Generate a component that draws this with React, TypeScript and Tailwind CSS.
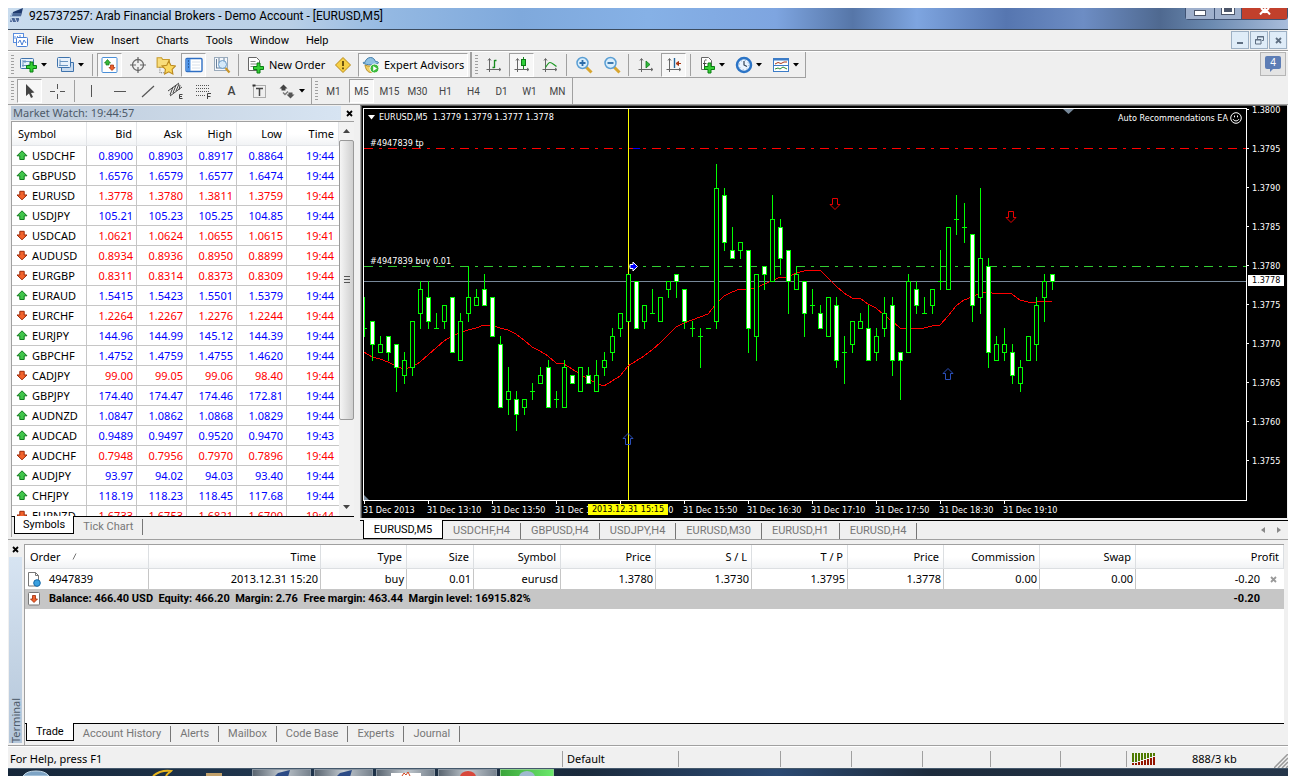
import React from 'react';
import clsx from 'clsx';

type Quote = [string, 'up' | 'down', string, string, string, string, string];

const quotes: Quote[] = [
  ['USDCHF', 'up', '0.8900', '0.8903', '0.8917', '0.8864', '19:44'],
  ['GBPUSD', 'up', '1.6576', '1.6579', '1.6577', '1.6474', '19:44'],
  ['EURUSD', 'down', '1.3778', '1.3780', '1.3811', '1.3759', '19:44'],
  ['USDJPY', 'up', '105.21', '105.23', '105.25', '104.85', '19:44'],
  ['USDCAD', 'down', '1.0621', '1.0624', '1.0655', '1.0615', '19:41'],
  ['AUDUSD', 'down', '0.8934', '0.8936', '0.8950', '0.8899', '19:44'],
  ['EURGBP', 'down', '0.8311', '0.8314', '0.8373', '0.8309', '19:44'],
  ['EURAUD', 'up', '1.5415', '1.5423', '1.5501', '1.5379', '19:44'],
  ['EURCHF', 'down', '1.2264', '1.2267', '1.2276', '1.2244', '19:44'],
  ['EURJPY', 'up', '144.96', '144.99', '145.12', '144.39', '19:44'],
  ['GBPCHF', 'up', '1.4752', '1.4759', '1.4755', '1.4620', '19:44'],
  ['CADJPY', 'down', '99.00', '99.05', '99.06', '98.40', '19:44'],
  ['GBPJPY', 'up', '174.40', '174.47', '174.46', '172.81', '19:44'],
  ['AUDNZD', 'up', '1.0847', '1.0862', '1.0868', '1.0829', '19:44'],
  ['AUDCAD', 'up', '0.9489', '0.9497', '0.9520', '0.9470', '19:43'],
  ['AUDCHF', 'down', '0.7948', '0.7956', '0.7970', '0.7896', '19:44'],
  ['AUDJPY', 'up', '93.97', '94.02', '94.03', '93.40', '19:44'],
  ['CHFJPY', 'up', '118.19', '118.23', '118.45', '117.68', '19:44'],
  ['EURNZD', 'down', '1.6733', '1.6753', '1.6821', '1.6700', '19:44'],
];

// open, high, low, close in pips above 1.3700
const candles = [
  [72, 76, 71, 72], [73, 73, 68, 70], [69, 71, 69, 70], [71, 71, 68, 69], [70, 70, 64, 67], [66, 69, 65, 68],
  [67, 73, 66, 73], [74, 78, 72, 77], [76, 78, 72, 73], [72, 74, 72, 72], [73, 75, 72, 75], [76, 76, 69, 69],
  [68, 74, 68, 73], [74, 80, 73, 76], [75, 77, 75, 76], [77, 79, 75, 75], [76, 76, 71, 71], [70, 71, 62, 62],
  [63, 67, 61, 64], [63, 64, 59, 61], [62, 63, 61, 63], [64, 65, 63, 64], [65, 67, 65, 66], [67, 68, 62, 62],
  [63, 64, 62, 63], [62, 68, 62, 67], [66, 66, 65, 65], [64, 67, 64, 67], [66, 67, 65, 65], [64, 68, 64, 66],
  [67, 69, 66, 68], [69, 72, 68, 71], [72, 74, 71, 74], [73, 79, 73, 79], [78, 78, 72, 72], [73, 75, 72, 75],
  [74, 77, 74, 74], [73, 76, 73, 76], [77, 78, 76, 78], [79, 79, 76, 78], [77, 77, 72, 73], [72, 73, 71, 72],
  [71, 72, 67, 71], [72, 72, 72, 72], [73, 93, 72, 90], [89, 90, 82, 83], [82, 85, 81, 81], [82, 83, 81, 83],
  [82, 82, 69, 72], [71, 79, 68, 79], [80, 80, 77, 79], [78, 89, 78, 86], [85, 86, 79, 81], [82, 82, 74, 78],
  [77, 80, 77, 79], [78, 78, 71, 74], [75, 77, 74, 75], [74, 75, 72, 72], [71, 76, 71, 76], [75, 76, 67, 68],
  [69, 71, 65, 69], [70, 73, 69, 73], [72, 74, 72, 73], [72, 75, 68, 68], [69, 72, 68, 71], [72, 76, 71, 74],
  [75, 76, 66, 68], [69, 69, 63, 68], [69, 79, 69, 78], [77, 78, 74, 75], [74, 76, 74, 74], [75, 77, 74, 77],
  [78, 82, 77, 78], [77, 85, 77, 85], [86, 89, 84, 86], [85, 88, 83, 85], [84, 84, 73, 75], [76, 90, 74, 81],
  [80, 81, 67, 69], [68, 71, 68, 70], [69, 72, 68, 70], [69, 70, 65, 66], [65, 68, 64, 67], [68, 71, 68, 71],
  [70, 76, 68, 75], [76, 79, 73, 78], [79, 79, 77, 78],
];

const movingAverage = [
  243, 248, 250, 253, 257, 260, 258, 253, 246, 239, 232, 227, 224, 221, 219, 216, 216, 219, 221, 225, 231, 238,
  242, 247, 254, 255, 260, 265, 270, 274, 277, 272, 267, 257, 252, 247, 241, 234, 226, 218, 214, 211, 208, 205,
  195, 187, 183, 180, 180, 179, 175, 172, 168, 168, 164, 162, 161, 161, 169, 177, 184, 189, 189, 195, 199, 206,
  212, 219, 219, 219, 219, 217, 216, 207, 197, 191, 188, 184, 183, 185, 184, 185, 191, 193, 193, 192, 192,
];

const priceLabels = ['1.3800', '1.3795', '1.3790', '1.3785', '1.3780', '1.3775', '1.3770', '1.3765', '1.3760', '1.3755'];
const timeLabels = [
  '31 Dec 2013', '31 Dec 13:10', '31 Dec 13:50', '31 Dec 14:30', '31 Dec 15:10', '31 Dec 15:50',
  '31 Dec 16:30', '31 Dec 17:10', '31 Dec 17:50', '31 Dec 18:30', '31 Dec 19:10',
];

const priceY = (pips: number) => Math.round(39.4 + (95 - pips) * 7.823);

/* ---------- small shared pieces ---------- */

function Caret() {
  return (
    <svg width="6" height="4" viewBox="0 0 6 4"><path d="M0 0h6L3 3.5z" fill="#000" /></svg>
  );
}

function Grip() {
  return <span className="h-5 w-[3px] bg-[repeating-linear-gradient(#a0a0a0_0_1px,#efefef_1px_3px)]" />;
}

function Sep() {
  return <span className="h-[22px] w-[3px] border-x border-[#efefef] bg-[#a0a0a0]" />;
}

type ToolProps = { label: string; pressed?: boolean; wide?: boolean; children: React.ReactNode };

function Tool({ label, pressed, wide, children }: ToolProps) {
  return (
    <button
      type="button"
      aria-label={label}
      className={clsx(
        'flex h-6 shrink-0 items-center',
        wide ? 'w-[34px] gap-[3px] pl-[3px]' : 'w-[25px] justify-center',
        pressed && 'border border-t-[#a0a0a0] border-l-[#a0a0a0] border-r-white border-b-white bg-[#f7f7f7]'
      )}
    >
      {children}
    </button>
  );
}

function Icon({ children, size = 18 }: { children: React.ReactNode; size?: number }) {
  return (
    <svg width={size} height={size} viewBox="0 0 18 18" fill="none" className="shrink-0">{children}</svg>
  );
}

const plus = (x: number, y: number) => (
  <path
    d={`M${x} ${y}h3v3.5h3.5v3h-3.500v3.500h-3v-3.500h-3.500v-3h3.500z`}
    fill="#35cf35"
    stroke="#0a7d12"
    strokeWidth="1"
  />
);

function AxisBase() {
  return <path d="M4.500 3v13M1.500 13.500h14M3 4.500l1.500-2 1.500 2M14 12l2 1.500-2 1.500" stroke="#666" />;
}

function Arrow({ dir }: { dir: 'up' | 'down' }) {
  return (
    <svg width="12" height="11" viewBox="0 0 12 11" className="shrink-0">
      {dir === 'up' ? (
        <path d="M6 .8L11 5.800H8.200V9.500H3.800V5.800H1z" fill="#3fc54a" stroke="#117a1c" strokeWidth="1" />
      ) : (
        <path d="M6 9.800L11 5H8.200V1.300H3.800V5H1z" fill="#f0622c" stroke="#9c2a08" strokeWidth="1" />
      )}
    </svg>
  );
}

function CloseX({ color = '#000' }: { color?: string }) {
  return (
    <svg width="7" height="7" viewBox="0 0 7 7"><path d="M1 1l5 5M6 1L1 6" stroke={color} strokeWidth="1.800" /></svg>
  );
}

/* ---------- window top ---------- */

function TitleBar() {
  return (
    <header className="flex h-[22px] items-start justify-between overflow-hidden border-b border-[#3c4c60] bg-[linear-gradient(90deg,#c9dcee_0%,#b9cfe6_22%,#93b8e2_30%,#7fa9dc_40%,#86b1e6_50%,#7ea5e0_60%,#5676a8_66%,#7ea5e0_71%,#5676b0_78%,#6d8dc4_84%,#4f6990_90%,#6b8ab0_94%,#a9bddc_100%)]">
      <div className="flex items-center gap-1">
        <svg width="17" height="16" viewBox="0 0 17 16">
          <path d="M5 4L15 0l-2 8H4z" fill="#1f3a6d" />
          <path d="M2 8h11M3 6h10" stroke="#7d9ac6" />
          <path d="M3 10h9l-2 4H2z" fill="#4b6797" />
          <path d="M3 10l2 5M7 10l2 5M11 9l2 6" stroke="#cddaf0" />
        </svg>
        <h1 className="font-['Roboto','Noto_Sans',sans-serif] text-[12px] leading-[15px] text-black">
          925737257: Arab Financial Brokers - Demo Account - [EURUSD,M5]
        </h1>
      </div>
      <div className="flex h-3 rounded-b-sm border border-t-0 border-[#3f5273]">
        <button type="button" aria-label="Minimize" className="flex w-7 items-start justify-center bg-[#9fb0cc] pt-0.5">
          <span className="h-1.5 w-3 border border-[#4c566a] bg-white" />
        </button>
        <button type="button" aria-label="Restore" className="flex w-7 items-start justify-center border-x border-[#3f5273] bg-[#9fb0cc]">
          <span className="h-1.5 w-3 border-2 border-t-0 border-white bg-[#4c566a] outline outline-[#4c566a]" />
        </button>
        <button type="button" aria-label="Close" className="flex w-[45px] items-start justify-center bg-[#c2402c]">
          <svg width="12" height="7" viewBox="0 0 12 7"><path d="M1 6.500L6 1l5 5.500M2 0l4 4 4-4" stroke="#fff" strokeWidth="2" fill="none" /></svg>
        </button>
      </div>
    </header>
  );
}

const menus = ['File', 'View', 'Insert', 'Charts', 'Tools', 'Window', 'Help'];

function MenuBar() {
  const box = 'flex h-[18px] w-[18px] items-center justify-center border border-[#9db0c4] bg-[#dfecf8]';
  return (
    <nav className="flex h-[21px] items-center justify-between border-b border-[#a0a0a0] bg-[#f0f0f0] pr-px pl-1">
      <div className="flex items-center">
        <svg width="16" height="16" viewBox="0 0 16 16" fill="none" className="mr-2">
          <rect x="1.500" y="1.500" width="10" height="9" fill="#fff" stroke="#5b8ede" />
          <path d="M3 7V4M5.500 8V4M8 6V3" stroke="#5b8ede" />
          <rect x="4.500" y="5.500" width="11" height="9" rx="1" fill="#fff" stroke="#4b80d6" />
          <path d="M6 11l2-3 2 5 2-5 2 3" stroke="#4b80d6" />
        </svg>
        <ul className="flex gap-[17px] font-['Roboto','Noto_Sans',sans-serif]">
          {menus.map((m) => (
            <li key={m}><button type="button" className="block leading-[17px]">{m}</button></li>
          ))}
        </ul>
      </div>
      <div className="flex gap-px">
        <button type="button" aria-label="Minimize chart" className="flex h-[18px] w-[18px] items-end justify-center border border-[#9db0c4] bg-[#dfecf8] pb-1">
          <span className="h-[2px] w-1.5 bg-[#5f6f82]" />
        </button>
        <button type="button" aria-label="Restore chart" className={box}>
          <svg width="9" height="9" viewBox="0 0 9 9" fill="none" stroke="#5f6f82"><path d="M2.500 3V.5h6v4H7M2 1h7" /><path d="M.5 3.500h5.500v4.500H.5zM0 4h6" /></svg>
        </button>
        <button type="button" aria-label="Close chart" className={box}><CloseX color="#5f6f82" /></button>
      </div>
    </nav>
  );
}

function StandardToolbar() {
  return (
    <div className="flex h-[27px] items-stretch border-t border-white">
      <div className="flex items-center gap-[3px] border-r-2 border-b border-[#a0a0a0] pr-0.5 pl-[3px]">
        <Grip />
        <Tool label="New chart" wide>
          <Icon>
            <rect x=".5" y="2.500" width="13" height="10" rx="1" fill="#e8f1fb" stroke="#3f73ac" />
            <path d="M3 4v7M3 5.500h8M2 9.500h9M5 4v3M9 8v3" stroke="#6a94bf" />
            {plus(10, 6)}
          </Icon>
          <Caret />
        </Tool>
        <Tool label="Profiles" wide>
          <Icon>
            <path d="M4.500 6.500h12v9h-12z" fill="#c9dbef" stroke="#3f73ac" />
            <rect x=".5" y="1.500" width="13" height="10" rx="1" fill="#e8f1fb" stroke="#3f73ac" />
            <path d="M3 3.500v6M3 5.500h8M2 9.500h9" stroke="#6a94bf" />
          </Icon>
          <Caret />
        </Tool>
        <Sep />
        <Tool label="Market Watch" pressed>
          <Icon>
            <rect x="1" y="1.500" width="15" height="15" rx="1" fill="#fff" stroke="#4a8fd8" />
            <path d="M3.500 7L6.500 3.500 9.500 7H8v2H5V7z" fill="#35b83b" stroke="#14791b" strokeWidth=".7" />
            <path d="M8 11.500l3 3 3-3h-1.500V9h-3v2.500z" fill="#f0622c" stroke="#9c2a08" strokeWidth=".7" />
          </Icon>
        </Tool>
        <Tool label="Data Window">
          <Icon><circle cx="9" cy="9" r="5.500" stroke="#666" strokeWidth="1.300" /><path d="M9 1v6M9 11v6M1 9h6M11 9h6" stroke="#666" strokeWidth="1.200" /></Icon>
        </Tool>
        <Tool label="Navigator">
          <Icon size={20}>
            <path d="M1 2.500h4l1 1.500h6v7H1z" fill="#f8dd7b" stroke="#c89c2c" />
            <path d="M3.500 11v5h4" stroke="#777" strokeDasharray="1 1" />
            <path d="M11.500 5.500l1.800 3.800 4.200.6-3 3 .7 4.200-3.700-2-3.700 2 .7-4.200-3-3 4.200-.6z" fill="#fbd960" stroke="#bb8a1f" />
          </Icon>
        </Tool>
        <Tool label="Terminal" pressed>
          <Icon>
            <rect x="1" y="2.500" width="16" height="13" rx="1" fill="#fff" stroke="#2f6fc4" strokeWidth="1.400" />
            <rect x="1.500" y="3" width="4" height="12" fill="#4d93e8" />
            <path d="M3 5h1M3 8h1M3 11h1" stroke="#12305c" />
            <path d="M7 6h8M7 9h8M7 12h8" stroke="#d8e0ea" />
          </Icon>
        </Tool>
        <Tool label="Strategy Tester">
          <Icon>
            <rect x="1.500" y="1.500" width="13" height="13" fill="#f4f7fb" stroke="#9ab" />
            <path d="M3.500 3v9M6 2v5M3 12h9M11 2v4" stroke="#67809b" />
            <circle cx="9.500" cy="8.500" r="4" fill="#cfe6f8" fillOpacity=".85" stroke="#6c9cc8" />
            <path d="M12.500 12l4 4.500" stroke="#c9952a" strokeWidth="2.200" />
          </Icon>
        </Tool>
        <Sep />
        <button type="button" className="flex h-6 w-[84px] items-center gap-1 pl-1 whitespace-nowrap">
          <Icon>
            <path d="M1.500 1.500h8l3 3v10h-11z" fill="#fff" stroke="#666" />
            <path d="M3.500 5.500h5M3.500 8h6M3.500 10.500h5" stroke="#888" />
            {plus(10, 7)}
          </Icon>
          New Order
        </button>
        <Tool label="Alert">
          <Icon><path d="M9 1.500L16.500 9 9 16.500 1.500 9z" fill="#f6cf45" stroke="#b88a17" /><path d="M9 5v5M9 11.500v1.800" stroke="#4a3503" strokeWidth="1.600" /></Icon>
        </Tool>
        <button type="button" aria-pressed="true" className="flex h-6 w-[110px] items-center gap-1 border border-t-[#a0a0a0] border-l-[#a0a0a0] border-r-white border-b-white bg-[#f7f7f7] pl-[3px] whitespace-nowrap">
          <Icon>
            <path d="M2.500 7c1-3 3-5.500 6-5.500s4 2 5 4c2 0 3 .5 3 1.500-3 2.500-12 2.500-15.500 0 0-.5.500-1 1.500 0z" fill="#8fc1e3" stroke="#3f7ba8" />
            <path d="M3 9c2 1.500 8 1.500 11 0 0 4-2 7-5.500 7.500C5 16 3.500 12.500 3 9z" fill="#f0cf62" stroke="#b58e26" />
            <circle cx="12.500" cy="12.500" r="4.500" fill="#3dbb3d" stroke="#fff" />
            <path d="M11.200 10v5l3.800-2.500z" fill="#fff" />
          </Icon>
          Expert Advisors
        </button>
      </div>
      <div className="flex items-center gap-[3px] border-r border-b border-[#a0a0a0] pr-0.5 pl-[3px]">
        <Grip />
        <Tool label="Bar chart"><Icon><AxisBase /><path d="M9.500 4v8M9.500 4.500h2M7.500 11.500h2" stroke="#178a1e" strokeWidth="1.300" /></Icon></Tool>
        <Tool label="Candlesticks" pressed>
          <Icon><AxisBase /><path d="M10.500 1v12" stroke="#178a1e" /><rect x="8.500" y="3.500" width="4" height="6" fill="#2fd03a" stroke="#0f7a18" /></Icon>
        </Tool>
        <Tool label="Line chart"><Icon><AxisBase /><path d="M4.500 11.500C6 9 7.500 6.500 9 6.500S12 8 15.500 10.500" stroke="#1e9a26" strokeWidth="1.200" /></Icon></Tool>
        <Sep />
        <Tool label="Zoom in">
          <Icon><path d="M11 11l5.500 5.500" stroke="#d8a52e" strokeWidth="3" /><circle cx="7.500" cy="7" r="5.500" fill="#d9eefc" stroke="#5b9fd4" strokeWidth="1.500" /><path d="M4.500 7h6M7.500 4v6" stroke="#2c6ca8" strokeWidth="1.800" /></Icon>
        </Tool>
        <Tool label="Zoom out">
          <Icon><path d="M11 11l5.500 5.500" stroke="#d8a52e" strokeWidth="3" /><circle cx="7.500" cy="7" r="5.500" fill="#d9eefc" stroke="#5b9fd4" strokeWidth="1.500" /><path d="M4.500 7h6" stroke="#2c6ca8" strokeWidth="1.800" /></Icon>
        </Tool>
        <Sep />
        <Tool label="Auto scroll"><Icon><AxisBase /><path d="M9 5v7l4-3.500z" fill="#2fb93a" stroke="#0f7a18" strokeWidth=".8" /></Icon></Tool>
        <Tool label="Chart shift" pressed>
          <Icon><AxisBase /><path d="M9.500 2v10" stroke="#24669b" strokeWidth="1.400" /><path d="M16 7.500h-3M13.500 5.500l-2.500 2 2.500 2z" fill="#c0431b" stroke="#a3300c" /></Icon>
        </Tool>
        <Sep />
        <Tool label="Indicators" wide>
          <Icon>
            <path d="M3.500 1.500h7l3 3v9h-10z" fill="#fff" stroke="#666" />
            <path d="M8.500 4c-2-.5-2 1-2 2.500v5M5 7.500h3.500" stroke="#444" />
            {plus(10, 7)}
          </Icon>
          <Caret />
        </Tool>
        <Tool label="Periods" wide>
          <Icon>
            <circle cx="9" cy="9" r="7" fill="#eaf5ff" stroke="#2b74c6" strokeWidth="2.500" />
            <path d="M9 5v4l3 1.500" stroke="#345" strokeWidth="1.200" />
            <circle cx="9" cy="9" r="4.800" stroke="#7fa3c5" strokeDasharray="1 2.800" />
          </Icon>
          <Caret />
        </Tool>
        <Tool label="Templates" wide>
          <Icon>
            <rect x="1.500" y="2.500" width="15" height="13" fill="#fff" stroke="#3c7cc7" />
            <path d="M1.500 3.500h15" stroke="#3c7cc7" strokeWidth="2" />
            <path d="M3 8l3-1.500 3 1 3-1.500h3" stroke="#a9391a" />
            <path d="M1.500 9.500h15" stroke="#3c7cc7" />
            <path d="M3 13l3-1 2 1 3-2 4 2" stroke="#2a8a32" />
          </Icon>
          <Caret />
        </Tool>
      </div>
      <div className="flex flex-1 items-start justify-end pr-0.5">
        <button type="button" aria-label="4 messages" className="flex h-6 w-[26px] items-center justify-center border border-[#b5b5b5] bg-[#e4e4e4]">
          <span className="relative mb-1 flex h-[13px] w-4 items-center justify-center rounded-xs bg-[#5d7db5] text-[10px] leading-none text-white">
            4
            <span className="absolute top-[12px] left-[5px] h-0 w-0 border-t-4 border-r-4 border-t-[#5d7db5] border-r-transparent" />
          </span>
        </button>
      </div>
    </div>
  );
}

const periods = ['M1', 'M5', 'M15', 'M30', 'H1', 'H4', 'D1', 'W1', 'MN'];

function LineToolbar() {
  return (
    <div className="flex h-[26px] items-stretch">
      <div className="flex items-center gap-[3px] border-r border-[#a0a0a0] pr-0.5 pl-[3px]">
        <Grip />
        <Tool label="Cursor" pressed><Icon><path d="M5 2v12l3-2.500 2 4.500 2-1-2-4 3.500-.5z" fill="#444" /></Icon></Tool>
        <Tool label="Crosshair"><Icon><path d="M8.500 2v5M8.500 12v5M1 9.500h5M11 9.500h5" stroke="#555" /></Icon></Tool>
        <Sep />
        <Tool label="Vertical line"><Icon><path d="M8.500 3v12" stroke="#555" /></Icon></Tool>
        <Tool label="Horizontal line"><Icon><path d="M3 9.500h12" stroke="#555" /></Icon></Tool>
        <Tool label="Trendline"><Icon><path d="M3 15L15 4" stroke="#555" strokeWidth="1.200" /></Icon></Tool>
        <Tool label="Equidistant channel">
          <Icon>
            <path d="M1 9L12 1M3 14L15 5M3 13l3-8M6 11l3-8M9 9l3-7M12 8l1-5" stroke="#444" />
            <path d="M15.500 12.500h-3v4h3M12.500 14.500h2.500" stroke="#444" />
          </Icon>
        </Tool>
        <Tool label="Fibonacci">
          <Icon>
            <path d="M1 3.500h14M1 6.500h14M1 9.500h14M1 13.500h9" stroke="#555" strokeDasharray="1 1" />
            <path d="M16 11.500h-3.500V17M12.500 14.500h3" stroke="#444" />
          </Icon>
        </Tool>
        <Tool label="Text"><span className="font-['Roboto','Noto_Sans',sans-serif] text-[12px] font-medium text-[#444]">A</span></Tool>
        <Tool label="Text label">
          <Icon>
            <rect x="2.500" y="3.500" width="12" height="12" stroke="#666" strokeDasharray="1 1" />
            <path d="M1.500 3.500h3" stroke="#333" strokeWidth="2" />
            <path d="M5 6.500h7M8.500 6.500V14" stroke="#444" strokeWidth="1.500" />
          </Icon>
        </Tool>
        <Tool label="Arrows" wide>
          <Icon>
            <path d="M5.500 2.500l4 4H7.500v2h-4v-2h-2z" fill="#444" />
            <path d="M5 10.500l2 2 3-3" stroke="#777" strokeWidth="1.300" />
            <path d="M10.500 10.500h4v2h2l-4 4-4-4h2z" fill="#555" />
          </Icon>
          <Caret />
        </Tool>
      </div>
      <div className="flex items-center gap-[3px] border-r border-[#a0a0a0] pr-0.5 pl-[3px]">
        <Grip />
        {periods.map((p) => (
          <Tool key={p} label={p} pressed={p === 'M5'}>
            <span className="pt-0.5 font-['Roboto','Noto_Sans',sans-serif] text-[10px] text-[#444]">{p}</span>
          </Tool>
        ))}
      </div>
    </div>
  );
}

/* ---------- market watch ---------- */

function MarketWatch() {
  const head = 'border-r border-b border-[#e3e5e8] text-right font-normal';
  const cell = 'border-b border-[#c6c6c6] text-right';
  return (
    <section className="flex w-[352px] shrink-0 flex-col border-b border-[#a0a0a0] pl-[3px]">
      <div className="flex h-4 items-center justify-between pr-[7px]">
        <h2 className="w-[330px] bg-linear-to-r from-[#bccada] to-[#d7e4f2] pl-0.5 leading-[14px] text-[#4d5a69]">
          Market Watch: 19:44:57
        </h2>
        <button type="button" aria-label="Close Market Watch"><CloseX /></button>
      </div>
      <div className="mr-1.5 flex h-[395px] overflow-hidden border-t border-l border-[#a0a0a0] bg-white">
        <table className="w-[327px] table-fixed border-separate border-spacing-0 self-start">
          <colgroup>
            <col className="w-[75px]" />
            <col className="w-[50px]" />
            <col className="w-[50px]" />
            <col className="w-[50px]" />
            <col className="w-[50px]" />
            <col />
          </colgroup>
          <thead>
            <tr className="h-6 bg-linear-to-b from-white from-50% to-[#f0f2f4]">
              <th className="border-r border-b border-[#e3e5e8] pl-1.5 text-left font-normal">Symbol</th>
              {['Bid', 'Ask', 'High', 'Low', 'Time'].map((h) => (
                <th key={h} className={clsx(head, 'pr-1')}>{h}</th>
              ))}
            </tr>
          </thead>
          <tbody>
            {quotes.map(([symbol, dir, ...cells]) => (
              <tr key={symbol} className={clsx('h-5', dir === 'up' ? 'text-[#0000ff]' : 'text-[#ff0000]')}>
                <td className="border-r border-b border-[#c6c6c6] pl-1 text-black">
                  <span className="flex items-center gap-1"><Arrow dir={dir} />{symbol}</span>
                </td>
                {cells.map((c, i) => (
                  <td key={i} className={clsx(cell, i === 4 ? 'pr-[5px]' : 'border-r pr-[3px]')}>{c}</td>
                ))}
              </tr>
            ))}
          </tbody>
        </table>
        <div className="flex flex-1 flex-col items-center bg-[#f2f2f2]">
          <span className="flex h-[18px] shrink-0 items-center"><svg width="7" height="4" viewBox="0 0 7 4"><path d="M0 4h7L3.500 0z" fill="#444" /></svg></span>
          <span className="flex h-[280px] w-[15px] shrink-0 flex-col items-center justify-center gap-px rounded-xs border border-[#999] bg-linear-to-r from-[#f5f5f5] to-[#cfcfcf]">
            <span className="h-0.5 w-1.5 border-t border-[#555]" />
            <span className="h-0.5 w-1.5 border-t border-[#555]" />
            <span className="h-0.5 w-1.5 border-t border-[#555]" />
          </span>
          <span className="mt-auto flex h-[18px] items-center"><svg width="7" height="4" viewBox="0 0 7 4"><path d="M0 0h7L3.500 4z" fill="#444" /></svg></span>
        </div>
      </div>
      <div className="mr-1.5 flex h-[21px] items-start border-t border-l border-t-black border-l-[#a0a0a0] pl-0.5 font-['Roboto','Noto_Sans',sans-serif]">
        <button type="button" className="-mt-px h-[18px] border-r border-b border-l border-black bg-white px-2 leading-[17px]">Symbols</button>
        <button type="button" className="my-0.5 border-r border-[#777] px-[9px] leading-4 text-[#777]">Tick Chart</button>
      </div>
    </section>
  );
}

/* ---------- chart ---------- */

function TrendArrow({ x, y, color, down }: { x: number; y: number; color: string; down?: boolean }) {
  return (
    <path
      d={down ? 'M-2.500-5.500h5v6H5L0 5.500-5 .5h2.500z' : 'M0-5.500L5-.5H2.500v6h-5v-6H-5z'}
      transform={`translate(${x} ${y})`}
      fill="none"
      stroke={color}
      strokeWidth="1"
    />
  );
}

function PricePlot() {
  return (
    <svg width="100%" height="391" shapeRendering="crispEdges">
      <line x1="0" y1={priceY(95) + 0.5} x2="100%" y2={priceY(95) + 0.5} stroke="#f00" strokeDasharray="9 6 3 6" />
      <line x1="0" y1={priceY(80) + 0.5} x2="100%" y2={priceY(80) + 0.5} stroke="#32cd32" strokeDasharray="9 6 3 6" />
      <line x1="0" y1={priceY(78) + 0.5} x2="100%" y2={priceY(78) + 0.5} stroke="#778899" />
      <rect x="264" y="0" width="1" height="391" fill="#ff0" />
      <rect x="269" y="39" width="7" height="1" fill="#00f" />
      <polyline points={movingAverage.map((y, i) => `${i * 8},${y}`).join(' ')} fill="none" stroke="#f00" />
      {candles.map(([open, high, low, close], i) => {
        const x = i * 8;
        const top = priceY(Math.max(open, close));
        const bottom = priceY(Math.min(open, close));
        return (
          <g key={i}>
            <rect x={x} y={priceY(high)} width="1" height={priceY(low) - priceY(high) + 1} fill="#0f0" />
            <rect x={x - 2} y={top} width="5" height={bottom - top + 1} fill="#0f0" />
            {bottom > top && (
              <rect x={x - 1} y={top + 1} width="3" height={bottom - top - 1} fill={close < open ? '#fff' : '#000'} />
            )}
          </g>
        );
      })}
      <g shapeRendering="auto">
        <TrendArrow x={264} y={330} color="#2b4fb8" />
        <TrendArrow x={584} y={265} color="#2b4fb8" />
        <TrendArrow x={471} y={95} color="#e80000" down />
        <TrendArrow x={647} y={108} color="#e80000" down />
        <path d="M266 155.500h3v-2.500l4.500 4.500-4.500 4.500v-2.500h-3z" fill="#00f" stroke="#fff" />
        <path d="M699 0h11l-5.500 5z" fill="#778899" />
        <path d="M0 386l5 5H0z" fill="#778899" />
      </g>
    </svg>
  );
}

const chartTabs = ['EURUSD,M5', 'USDCHF,H4', 'GBPUSD,H4', 'USDJPY,H4', 'EURUSD,M30', 'EURUSD,H1', 'EURUSD,H4'];

function ChartWindow() {
  return (
    <section className="flex min-w-0 flex-1 flex-col border-b border-[#a0a0a0]">
      <div className="mr-px border-t border-l border-[#a0a0a0] border-t-[#606060]">
        <div className="border-l border-[#505050] bg-black pl-px font-['DejaVu_Sans_Condensed','Noto_Sans',sans-serif] text-[9px] text-white">
          <div className="flex">
            <div className="relative mt-0.5 min-w-0 flex-1 border border-white">
              <PricePlot />
              <div className="absolute top-0.5 left-1 flex items-center gap-1 leading-3">
                <svg width="7" height="5" viewBox="0 0 7 5"><path d="M0 0h7L3.500 4.500z" fill="#fff" /></svg>
                <span className="whitespace-pre">EURUSD,M5  1.3779 1.3779 1.3777 1.3778</span>
              </div>
              <span className="absolute top-[28px] left-1.5 leading-3">#4947839 tp</span>
              <span className="absolute top-[146px] left-1.5 leading-3">#4947839 buy 0.01</span>
              <div className="absolute top-[3px] right-1 flex items-center gap-0.5 leading-3">
                Auto Recommendations EA
                <svg width="12" height="12" viewBox="0 0 12 12" fill="none" stroke="#fff">
                  <circle cx="6" cy="6" r="5.300" />
                  <path d="M4.500 3.500v1.800M7.500 3.500v1.800M3 7c1 2.500 5 2.500 6 0" />
                </svg>
              </div>
            </div>
            <div className="relative w-10">
              {priceLabels.map((p, i) => (
                <div key={p} className={clsx('flex items-end gap-[3px]', i === 0 ? 'h-2' : 'h-[39px]')}>
                  <span className="mb-1 h-px w-0.5 bg-white" />
                  <span className="leading-2">{p}</span>
                </div>
              ))}
              <span className="absolute top-[169px] left-px w-9 bg-white pl-1 leading-[11px] text-black">1.3778</span>
            </div>
          </div>
          <div className="relative flex h-[17px] overflow-hidden">
            {timeLabels.map((t) => (
              <div key={t} className="w-16 shrink-0 whitespace-nowrap">
                <div className="ml-px h-[3px] w-px bg-white" />
                <div className="leading-3">{t}</div>
              </div>
            ))}
            <span className="absolute top-[3px] left-[225px] w-20 bg-[#ffff00] text-center leading-[11px] text-black">2013.12.31 15:15</span>
          </div>
        </div>
      </div>
      <div className="mt-0.5 flex h-[19px] items-start justify-between border-t border-black pl-[3px] font-['Roboto','Noto_Sans',sans-serif]">
        <div className="flex">
          {chartTabs.map((t, i) =>
            i === 0 ? (
              <button key={t} type="button" className="-mt-px h-[19px] w-20 border-r border-b border-l border-black bg-white leading-[17px]">{t}</button>
            ) : (
              <button key={t} type="button" className="mt-0.5 border-r border-[#777] px-[10px] leading-[14px] text-[#777]">{t}</button>
            )
          )}
        </div>
        <div className="flex gap-3 pt-1.5 pr-[7px]">
          <button type="button" aria-label="Scroll tabs left"><svg width="4" height="6" viewBox="0 0 4 6"><path d="M4 0v6L0 3z" fill="#888" /></svg></button>
          <button type="button" aria-label="Scroll tabs right"><svg width="4" height="6" viewBox="0 0 4 6"><path d="M0 0v6l4-3z" fill="#888" /></svg></button>
        </div>
      </div>
    </section>
  );
}

/* ---------- terminal ---------- */

const orderHeads = ['Time', 'Type', 'Size', 'Symbol', 'Price', 'S / L', 'T / P', 'Price', 'Commission', 'Swap', 'Profit'];
const orderCells = ['2013.12.31 15:20', 'buy', '0.01', 'eurusd', '1.3780', '1.3730', '1.3795', '1.3778', '0.00', '0.00'];
const terminalTabs = ['Account History', 'Alerts', 'Mailbox', 'Code Base', 'Experts', 'Journal'];

function Terminal() {
  return (
    <section className="flex flex-1 border-b border-[#a0a0a0] pt-1">
      <div className="flex w-4 shrink-0 flex-col items-center gap-1 pt-0.5 pr-0.5 pb-0.5">
        <button type="button" aria-label="Close Terminal"><CloseX /></button>
        <h2 className="flex w-[13px] flex-1 rotate-180 items-center bg-linear-to-b from-[#b4c6d9] to-[#d7e4f2] leading-[13px] text-[#4d5a69] [writing-mode:vertical-rl]">
          Terminal
        </h2>
      </div>
      <div className="mr-1 flex min-w-0 flex-1 flex-col border-l border-[#a0a0a0]">
        <div className="flex-1 border-t border-[#a0a0a0] bg-white">
          <table className="w-full table-fixed border-separate border-spacing-0">
            <colgroup>
              <col className="w-[124px]" />
              <col className="w-[172px]" />
              <col className="w-[86px]" />
              <col className="w-[67px]" />
              <col className="w-[87px]" />
              <col className="w-[95px]" />
              <col className="w-[96px]" />
              <col className="w-[96px]" />
              <col className="w-[96px]" />
              <col className="w-[96px]" />
              <col className="w-[96px]" />
              <col />
            </colgroup>
            <thead>
              <tr className="h-6 bg-linear-to-b from-white from-50% to-[#f0f2f4]">
                <th className="border-r border-b border-[#dcdfe2] pl-[5px] text-left font-normal">
                  <span className="flex items-center gap-3">
                    Order
                    <svg width="6" height="7" viewBox="0 0 6 7"><path d="M1 6.500L4 .5" stroke="#777" /></svg>
                  </span>
                </th>
                {orderHeads.map((h, i) => (
                  <th key={i} className="border-r border-b border-[#dcdfe2] pr-1 text-right font-normal">{h}</th>
                ))}
              </tr>
            </thead>
            <tbody>
              <tr className="h-5">
                <td className="border-r border-[#c6c6c6] pl-0.5">
                  <span className="flex items-center gap-2">
                    <svg width="14" height="15" viewBox="0 0 14 15" fill="none">
                      <path d="M1.500.5h7l3 3v10.500h-10z" fill="#fff" stroke="#777" />
                      <path d="M8.500.5v3h3" stroke="#777" />
                      <circle cx="10" cy="11" r="3.300" fill="#39a0e0" stroke="#1568a8" />
                    </svg>
                    4947839
                  </span>
                </td>
                {orderCells.map((c, i) => (
                  <td key={i} className="border-r border-[#c6c6c6] pr-0.5 text-right">{c}</td>
                ))}
                <td className="pr-[7px]">
                  <span className="flex items-center justify-end gap-2.5">
                    -0.20
                    <button type="button" aria-label="Close order"><CloseX color="#999" /></button>
                  </span>
                </td>
              </tr>
              <tr className="h-5 bg-[#c6c6c6] font-['Roboto','Noto_Sans',sans-serif] font-bold">
                <td colSpan={11} className="pl-0.5">
                  <span className="flex items-center gap-2 leading-[18px] whitespace-pre">
                    <svg width="14" height="14" viewBox="0 0 14 14">
                      <rect x="1.500" y=".5" width="11" height="12.500" rx="1" fill="#fff" stroke="#777" />
                      <path d="M7 10.500L10.500 7H8.500V3.500h-3V7h-2z" fill="#f0622c" stroke="#9c2a08" strokeWidth=".8" />
                    </svg>
                    Balance: 466.40 USD  Equity: 466.20  Margin: 2.76  Free margin: 463.44  Margin level: 16915.82%
                  </span>
                </td>
                <td className="pr-6 text-right leading-[18px]">-0.20</td>
              </tr>
            </tbody>
          </table>
        </div>
        <div className="flex h-[22px] items-start border-t border-black pl-px font-['Roboto','Noto_Sans',sans-serif]">
          <button type="button" className="-mt-px h-[18px] border-r border-b border-l border-black bg-white px-[9px] leading-[17px]">Trade</button>
          {terminalTabs.map((t) => (
            <button key={t} type="button" className="my-0.5 border-r border-[#777] px-[9px] leading-4 text-[#777]">{t}</button>
          ))}
        </div>
      </div>
    </section>
  );
}

function StatusBar() {
  const part = 'h-4 border-l border-[#a0a0a0]';
  return (
    <footer className="flex h-[22px] items-center border-t border-white pt-0.5">
      <span className="flex-1 pl-0.5">For Help, press F1</span>
      <span className={clsx(part, 'w-[116px] pl-1 leading-4')}>Default</span>
      <span className={clsx(part, 'w-[102px]')} />
      <span className={clsx(part, 'w-[71px]')} />
      <span className={clsx(part, 'w-[71px]')} />
      <span className={clsx(part, 'w-[68px]')} />
      <span className={clsx(part, 'w-[70px]')} />
      <span className={clsx(part, 'w-[66px]')} />
      <span className={clsx(part, 'flex w-[148px] items-center pl-[5px]')}>
        <svg width="24" height="12" viewBox="0 0 24 12" shapeRendering="crispEdges">
          {[9, 9, 8, 7, 6, 5, 4, 3].map((h, i) => (
            <g key={i}>
              <rect x={i * 3} y="0" width="2" height={h} fill="#4f7a00" />
              <rect x={i * 3} y={h + 1} width="2" height={11 - h} fill="#951500" />
            </g>
          ))}
        </svg>
        <span className="pl-9">888/3 kb</span>
      </span>
      <svg width="14" height="14" viewBox="0 0 14 14" className="self-end"><path d="M0 14L14 0M4 14L14 4M8 14l6-6M12 14l2-2" stroke="#999" strokeWidth="1.500" /></svg>
    </footer>
  );
}

function Taskbar() {
  const app = 'flex h-2 w-[59px] justify-center border-x border-t border-[#8b97a3] bg-linear-to-r from-[#5b6671] via-[#c3cad0] to-[#78838e]';
  return (
    <div className="flex h-2 overflow-hidden border-t border-[#44586c] bg-[linear-gradient(90deg,#16273a,#20364e_20%,#1a2a3c_45%,#2b4a73_60%,#1d2b3c_72%,#25364a)]">
      <div className="flex w-[244px] shrink-0 pl-3.5">
        <svg width="28" height="7" viewBox="0 0 28 7"><path d="M1 7a14 8 0 0126 0z" fill="#7da3c4" stroke="#c6dbea" /></svg>
        <svg width="22" height="7" viewBox="0 0 22 7" className="ml-[102px]"><path d="M1 7C6 3 12 1 19 2c-2 2-4 3-5 5" fill="none" stroke="#e8b51e" strokeWidth="2" /></svg>
        <span className="mt-1 ml-8 h-2 w-4 bg-[#c1a06a]" />
      </div>
      <div className="flex gap-[3px]">
        <button type="button" aria-label="Terminal window 1" className={app}><svg width="18" height="7" viewBox="0 0 18 7"><path d="M1 7l4-4 12-3-2 7z" fill="#2c4b86" /></svg></button>
        <button type="button" aria-label="Terminal window 2" className={app}><svg width="18" height="7" viewBox="0 0 18 7"><path d="M1 7l4-4 12-3-2 7z" fill="#2c4b86" /></svg></button>
        <button type="button" aria-label="Document" className={app}><svg width="30" height="7" viewBox="0 0 30 7"><path d="M0 3h30v4H0z" fill="#fff" /><path d="M11 6l2-3 2 2 2-3 2 4" stroke="#d1451f" fill="none" /></svg></button>
        <button type="button" aria-label="Browser" className={app}><svg width="18" height="7" viewBox="0 0 18 7"><path d="M1 7a8 6 0 0116 0z" fill="#d8483c" /></svg></button>
        <button type="button" aria-label="Downloads" className="flex h-2 w-[54px] justify-center border-x border-t border-[#8bd08b] bg-linear-to-r from-[#3ba53b] to-[#6be86b]">
          <svg width="18" height="7" viewBox="0 0 18 7"><path d="M1 7a8 6 0 0116 0z" fill="#9fb9cf" /></svg>
        </button>
      </div>
    </div>
  );
}

export default function App() {
  return (
    <div className="flex min-h-screen flex-col bg-white px-2 pt-2 font-['Noto_Sans',sans-serif] text-[11px] leading-4 text-black">
      <TitleBar />
      <MenuBar />
      <div className="border-b border-[#a0a0a0] bg-[#efefef]">
        <StandardToolbar />
        <LineToolbar />
      </div>
      <main className="flex flex-1 flex-col bg-[#f0f0f0]">
        <div className="flex">
          <MarketWatch />
          <ChartWindow />
        </div>
        <Terminal />
        <StatusBar />
      </main>
      <Taskbar />
    </div>
  );
}
